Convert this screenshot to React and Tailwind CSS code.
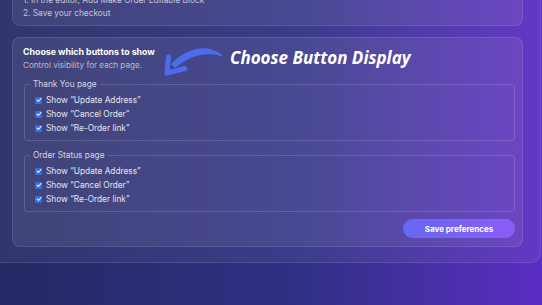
// App.jsx
const rows = ["Show “Update Address”", "Show “Cancel Order”", "Show “Re-Order link”"];

const Check = () => (
  <span className="w-[7px] h-[7px] rounded-[1px] bg-[#2f6fe8] flex items-center justify-center shrink-0">
    <svg viewBox="0 0 8 8" className="w-[6px] h-[6px]" aria-hidden="true">
      <path d="M1.5 4.2 L3.3 6 L6.6 2" fill="none" stroke="#fff" strokeWidth="1.4" strokeLinecap="round" strokeLinejoin="round" />
    </svg>
  </span>
);

const PageGroup = ({ title, className }) => (
  <fieldset className={`border border-white/15 rounded-[3px] pl-[10px] pr-2 pt-[4px] pb-[5px] ${className}`}>
    <legend className="-ml-[5px] px-[3px] text-[8.3px] leading-[10px] text-[#d4d6e6]">{title}</legend>
    {rows.map((r) => (
      <label key={r} className="flex items-center gap-[4px] h-[14px] text-[8.3px] leading-[14px] text-[#e4e5f0]">
        <Check />
        <span>{r}</span>
      </label>
    ))}
  </fieldset>
);

export default function App() {
  return (
    <div
      className="relative w-[542px] h-[305px] overflow-hidden bg-linear-to-r from-[#262964] via-[#2f3084] via-55% to-[#5a2cc2]"
      style={{ fontFamily: "Inter, 'Liberation Sans', sans-serif" }}
    >
      {/* outer panel */}
      <div className="-mt-[24px] -ml-[10px] w-[551px] h-[287px] bg-white/6 border border-white/10 rounded-br-[10px] pt-[9px] pl-[21px] pr-[17px] flex flex-col gap-[11px]">
        {/* steps card */}
        <div className="rounded-[8px] border border-white/10 bg-white/7 pt-[7px] pb-[5px] px-[10px]">
          <p className="text-[8.3px] leading-[13px] text-[#c4c6da]">1. In the editor, Add Make Order Editable Block</p>
          <p className="text-[8.3px] leading-[13px] text-[#c4c6da]">2. Save your checkout</p>
        </div>

        {/* visibility card */}
        <div className="rounded-[8px] border border-white/10 bg-white/7 pt-[8px] pb-[8px] pl-[10px] pr-[7px] flex flex-col">
          <h2 className="text-[8.8px] leading-[11px] font-bold text-white">Choose which buttons to show</h2>
          <p className="mt-[3px] text-[8.1px] leading-[11px] text-[#babcd2]">Control visibility for each page.</p>
          <PageGroup title="Thank You page" className="mt-[8px] ml-[1px]" />
          <PageGroup title="Order Status page" className="mt-[9px] ml-[1px]" />
          <button className="mt-[7px] self-end w-[112px] h-[19px] rounded-full bg-linear-to-r from-[#6468f2] to-[#8b5cf6] text-white text-[8px] font-bold">
            Save preferences
          </button>
        </div>
      </div>

      {/* annotation */}
      <svg className="absolute left-[160px] top-[42px] w-[70px] h-[38px]" viewBox="160 42 70 38" aria-hidden="true">
        <path d="M222 55 C210 45 190 45 171 64 L175 68 C192 54 208 52 222 56.5 Z" fill="#4d6cec" />
        <path d="M168.5 57 L167 73 L185 68.5" fill="none" stroke="#4d6cec" strokeWidth="5" strokeLinecap="round" strokeLinejoin="round" />
      </svg>
      <span
        className="absolute left-[230px] top-[46px] text-[17px] leading-[23px] font-bold italic text-white whitespace-nowrap"
        style={{ fontFamily: "'Open Sans', Lato, sans-serif" }}
      >
        Choose Button Display
      </span>
    </div>
  );
}
